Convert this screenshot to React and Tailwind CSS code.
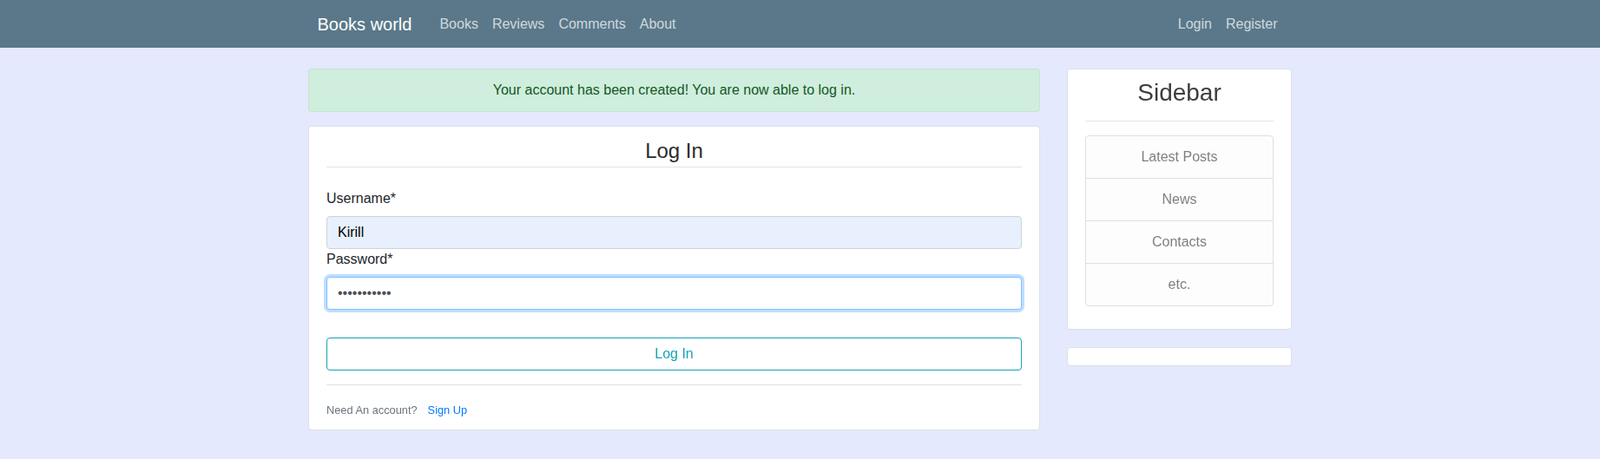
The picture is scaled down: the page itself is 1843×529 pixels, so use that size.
import React from 'react';

const NAV_LEFT = ['Books', 'Reviews', 'Comments', 'About'];
const NAV_RIGHT = ['Login', 'Register'];
const SIDE_LINKS = ['Latest Posts', 'News', 'Contacts', 'etc.'];

export default function App() {
  return (
    <div className="min-h-screen bg-[#e4e9fd] font-['Liberation_Sans',Arial,sans-serif] text-[#212529] text-base leading-6">

      {/* Navbar */}
      <header className="h-[55px] bg-[#5a7889]">
        <div className="w-[1140px] mx-auto pl-[14px] pr-[12px] h-full flex items-center justify-between">
          <div className="flex items-center">
            <a href="#" className="text-[20px] leading-[30px] text-white mr-6">Books world</a>
            <nav className="flex">
              {NAV_LEFT.map(l => (
                <a key={l} href="#" className="px-2 text-[#cfd8de]">{l}</a>
              ))}
            </nav>
          </div>
          <nav className="flex">
            {NAV_RIGHT.map(l => (
              <a key={l} href="#" className="px-2 text-[#cfd8de]">{l}</a>
            ))}
          </nav>
        </div>
      </header>

      {/* Main */}
      <main className="w-[1133px] mx-auto pt-6 flex gap-8 items-start">

        <div className="w-[843px] shrink-0">
          <div className="mb-4 px-5 py-3 border border-[#c3e6cb] bg-[#cfeedd] text-[#155724] rounded text-center">
            Your account has been created! You are now able to log in.
          </div>

          <div className="bg-white border border-[#dcdfe6] rounded px-5 py-[10px] mb-5">
            <form onSubmit={e => e.preventDefault()}>
              <div className="text-[24px] leading-9 text-center text-[#2b2b2b] border-b border-[#dee2e6] mb-6">Log In</div>

              <label className="block mb-2">Username*</label>
              <input
                type="text"
                defaultValue="Kirill"
                className="block w-full h-[38px] px-3 border border-[#ced4da] rounded bg-[#e8f0fe] text-black outline-none"
              />

              <label className="block mb-2">Password*</label>
              <input
                type="password"
                defaultValue="kirillpass1"
                autoFocus
                className="block w-full h-[38px] px-3 border border-[#80bdff] rounded bg-white text-[#495057] outline-none shadow-[0_0_0_3px_rgba(0,123,255,0.25)]"
              />

              <button
                type="submit"
                className="mt-8 block w-full h-[38px] border border-[#17a2b8] text-[#17a2b8] rounded bg-white"
              >
                Log In
              </button>
            </form>

            <div className="mt-4 pt-4 border-t border-[#dee2e6]">
              <span className="text-[12.8px] text-[#6c757d]">
                Need An account?
                <a href="#" className="ml-3 text-[#007bff]">Sign Up</a>
              </span>
            </div>
          </div>
        </div>

        {/* Sidebar */}
        <aside className="w-[259px] shrink-0 -ml-[1px]">
          <div className="bg-white border border-[#dcdfe6] rounded px-5 py-[10px] mb-5">
            <h3 className="text-[28px] leading-[1.2] text-center text-[#3d3d3d]">Sidebar</h3>
            <hr className="mt-[15px] mb-4 border-0 border-t border-[#e5e5e5]" />
            <ul className="mb-4 border border-[#dfdfdf] rounded divide-y divide-[#dfdfdf] bg-[#fdfdfe]">
              {SIDE_LINKS.map(s => (
                <li key={s} className="py-3 text-center text-[#7e7f82]">{s}</li>
              ))}
            </ul>
          </div>
          <div className="bg-white border border-[#dcdfe6] rounded h-[22px]" />
        </aside>

      </main>
    </div>
  );
}
